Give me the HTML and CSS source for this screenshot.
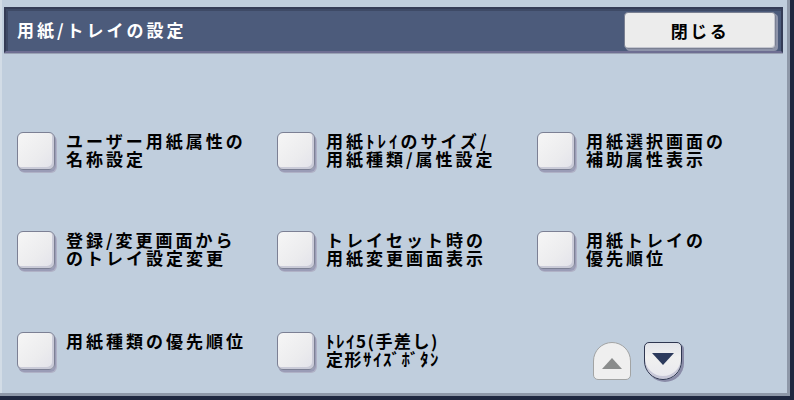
FILE: index.html
```html
<!DOCTYPE html>
<html lang="ja">
<head>
<meta charset="utf-8">
<link rel="stylesheet" href="styles.css">
</head>
<body>
<div class="screen">
  <div class="header">
    <div class="title">用紙/トレイの設定</div>
    <button class="close">閉じる</button>
  </div>
  <div class="grid">
    <div class="item"><span class="box"></span><span class="label"><span class="line">ユーザー用紙属性の</span><span class="line">名称設定</span></span></div>
    <div class="item"><span class="box"></span><span class="label"><span class="line">用紙ﾄﾚｲのサイズ/</span><span class="line">用紙種類/属性設定</span></span></div>
    <div class="item"><span class="box"></span><span class="label"><span class="line">用紙選択画面の</span><span class="line">補助属性表示</span></span></div>
    <div class="item"><span class="box"></span><span class="label"><span class="line">登録/変更画面から</span><span class="line">のトレイ設定変更</span></span></div>
    <div class="item"><span class="box"></span><span class="label"><span class="line">トレイセット時の</span><span class="line">用紙変更画面表示</span></span></div>
    <div class="item"><span class="box"></span><span class="label"><span class="line">用紙トレイの</span><span class="line">優先順位</span></span></div>
    <div class="item"><span class="box"></span><span class="label"><span class="line">用紙種類の優先順位</span></span></div>
    <div class="item"><span class="box"></span><span class="label half"><span class="line">ﾄﾚｲ5(手差し)</span><span class="line">定形ｻｲｽﾞﾎﾞﾀﾝ</span></span></div>
    <div class="scroll">
      <span class="arrow up"><svg width="20" height="11" viewBox="0 0 20 11"><polygon points="10,0 20,11 0,11" fill="#8a8c8c"/></svg></span>
      <span class="arrow down"><svg width="22" height="12" viewBox="0 0 22 12"><polygon points="0,0 22,0 11,12" fill="#2c3a5c"/></svg></span>
    </div>
  </div>
</div>
</body>
</html>
```

FILE: styles.css
```css
html, body {
  margin: 0;
  padding: 0;
}
body {
  font-family: "Noto Sans CJK JP", "Noto Sans", sans-serif;
}
.screen {
  width: 794px;
  height: 400px;
  box-sizing: border-box;
  background: #c0cedd;
  border-right: 4px solid #1f2840;
  border-bottom: 4px solid #1f2840;
  box-shadow: inset -3px -3px 0 #8e98a8, inset 2px 0 0 #d2dce6;
  overflow: hidden;
}
.header {
  margin: 7px 7px 0 4px;
  height: 46px;
  box-sizing: border-box;
  background: #4c5b7b;
  border: 2px solid #343c56;
  border-bottom-color: #6e6e92;
  box-shadow: inset 2px 2px 0 #3e4a66, 0 1px 0 #9aa2b4;
  display: flex;
  align-items: center;
  justify-content: space-between;
  padding: 0 5px 0 11px;
}
.title {
  color: #ffffff;
  font-size: 17px;
  font-weight: 700;
  letter-spacing: 3px;
  line-height: 20px;
}
.close {
  width: 152px;
  height: 37px;
  margin: 0;
  padding: 0;
  background: #ececec;
  border: 1px solid #7a8092;
  border-radius: 4px;
  box-shadow: 2px 2px 0 #8e94aa, inset -1px -1px 0 #c4c6d0;
  font-family: "Noto Sans CJK JP", "Noto Sans", sans-serif;
  font-size: 17px;
  font-weight: 700;
  letter-spacing: 2.5px;
  color: #000;
}
.grid {
  margin-top: 79px;
  padding-left: 17px;
  display: grid;
  grid-template-columns: 260px 260px 240px;
  grid-template-rows: 99px 101px 50px;
}
.item {
  display: flex;
  align-items: flex-start;
  gap: 11px;
}
.box {
  flex: none;
  width: 38px;
  height: 38px;
  box-sizing: border-box;
  background: linear-gradient(135deg, #f6f6f6 0%, #ececee 60%, #e2e2ea 100%);
  border: 1px solid #7c8094;
  border-radius: 6px;
  box-shadow: 1px 2px 0 #9a9cb6, 2px 3px 0 #b0b2c6, inset -2px -2px 0 #cacbd8;
}
.label {
  display: flex;
  flex-direction: column;
  font-size: 17px;
  font-weight: 700;
  letter-spacing: 3px;
  color: #000;
}
.line {
  display: block;
  height: 18px;
  line-height: 18px;
  white-space: nowrap;
}
.label.half {
  letter-spacing: 1.5px;
}
.scroll {
  display: flex;
  gap: 13px;
  padding: 10px 0 0 56px;
}
.arrow {
  width: 38px;
  height: 38px;
  box-sizing: border-box;
  display: flex;
  align-items: center;
  justify-content: center;
}
.arrow.up {
  background: #efefef;
  border: 1px solid #a2a4a4;
  border-radius: 19px 19px 5px 5px;
  padding-top: 4px;
}
.arrow.down {
  background: linear-gradient(180deg, #e2e4ea 0%, #f0f0f0 40%, #e8e8ee 100%);
  border: 1px solid #2e3650;
  border-radius: 5px 5px 19px 19px;
  box-shadow: 2px 2px 0 #8a8ca8, inset 0 -3px 0 #c8c8d8;
  padding-bottom: 4px;
}
```
